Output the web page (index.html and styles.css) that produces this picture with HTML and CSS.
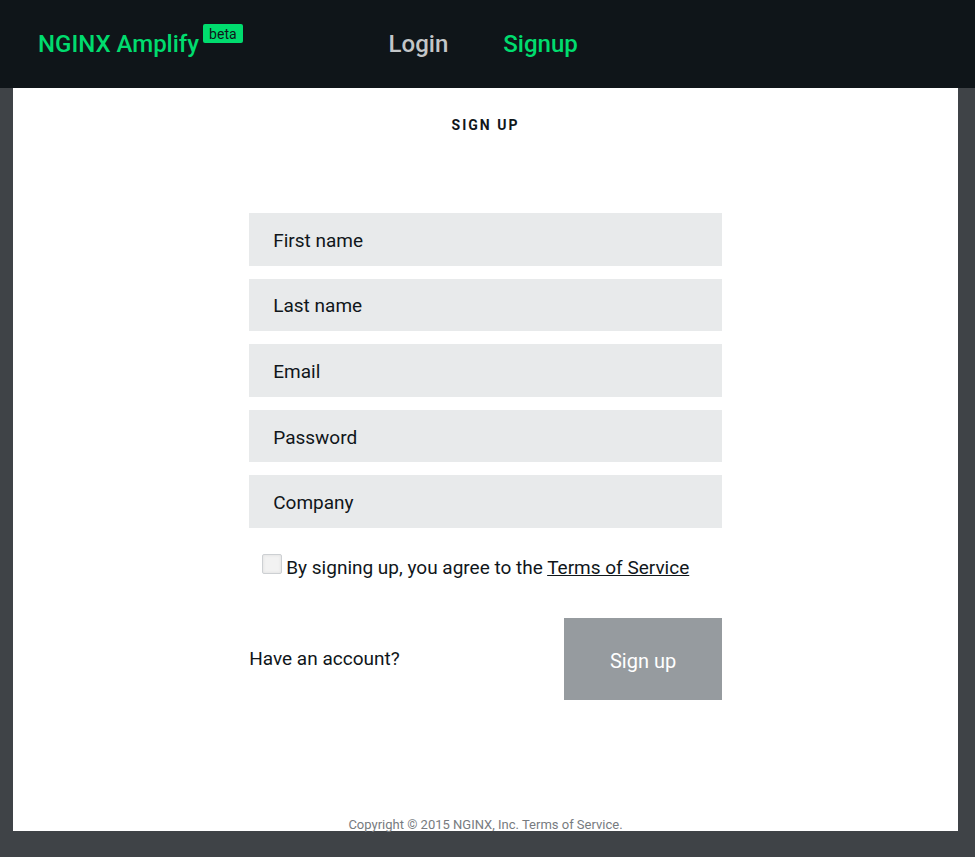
FILE: index.html
```html
<!DOCTYPE html>
<html lang="en">
  <head>
    <meta charset="UTF-8" />
    <meta name="viewport" content="width=device-width, initial-scale=1.0" />
    <title>NGINX Amplify</title>
    <link rel="stylesheet" href="styles.css">
  </head>
  <body>
    <header class="header">
      <a class="logo" href="#">NGINX Amplify <span class="beta">beta</span></a>
      <nav class="nav">
        <a href="#login">Login</a>
        <a class="active" href="#signup">Signup</a>
      </nav>
    </header>
    <main class="panel">
      <h1>Sign up</h1>
      <form class="signup-form">
        <div class="fields">
          <input type="text" placeholder="First name" aria-label="First name" />
          <input type="text" placeholder="Last name" aria-label="Last name" />
          <input type="email" placeholder="Email" aria-label="Email" />
          <input type="password" placeholder="Password" aria-label="Password" />
          <input type="text" placeholder="Company" aria-label="Company" />
        </div>
        <div class="terms">
          <input type="checkbox" id="agree" />
          <label for="agree">By signing up, you agree to the <a href="#terms">Terms of Service</a></label>
        </div>
        <div class="actions">
          <a href="#login">Have an account?</a>
          <button type="submit">Sign up</button>
        </div>
      </form>
      <footer class="footer">Copyright © 2015 NGINX, Inc. <a href="#terms">Terms of Service.</a></footer>
    </main>
  </body>
</html>
```

FILE: styles.css
```css
* {
  box-sizing: border-box;
}
body {
  display: flex;
  flex-direction: column;
  min-height: 100vh;
  margin: 0;
  background-color: #3f4347;
  color: #10161a;
  font-family: Roboto, "Liberation Sans", sans-serif;
  font-size: 19px;
  line-height: 28px;
}
a {
  color: inherit;
  text-decoration: none;
}
.header {
  display: flex;
  align-items: center;
  height: 88px;
  padding: 0 38px;
  background-color: #0f1519;
  font-size: 24px;
  font-weight: 500;
}
.logo {
  display: flex;
  width: 39%;
  gap: 4px;
  color: #00dc6e;
}
.beta {
  height: 19px;
  padding: 0 6px;
  margin-top: -6px;
  border-radius: 2px;
  background-color: #00dc6e;
  color: #10161a;
  font-size: 14px;
  font-weight: 400;
  line-height: 21px;
}
.nav {
  display: flex;
  gap: 55px;
  color: #c3c6c8;
}
.nav .active {
  color: #00dc6e;
}
.panel {
  display: flex;
  flex-direction: column;
  align-items: center;
  flex: 1;
  margin: 0 17px 26px 13px;
  background-color: #fff;
}
.panel h1 {
  margin: 27px 0 78px;
  font-size: 14px;
  font-weight: 700;
  line-height: 20px;
  letter-spacing: 2px;
  text-transform: uppercase;
}
.signup-form {
  width: 50%;
}
.fields {
  display: grid;
  grid-auto-rows: 1fr;
  gap: 13px;
  height: 315px;
}
.fields input {
  width: 100%;
  padding: 3px 24px 0;
  border: none;
  border-radius: 0;
  background-color: #e8eaeb;
  color: #10161a;
  font: inherit;
}
.fields input::placeholder {
  color: #10161a;
  opacity: 1;
}
.terms {
  display: flex;
  gap: 4px;
  margin: 26px 0 36px 13px;
}
.terms input {
  appearance: none;
  width: 20px;
  height: 20px;
  margin: 0;
  border: 1px solid #cdd0d3;
  border-radius: 2px;
  background-color: #f2f2f2;
  box-shadow: inset 0 0 3px #dcdcdc;
}
.terms input:checked {
  background-color: #00dc6e;
}
.terms a {
  text-decoration: underline;
}
.actions {
  display: flex;
  align-items: center;
  justify-content: space-between;
}
.actions button {
  width: 33.3%;
  height: 82px;
  padding: 4px 0 0;
  border: none;
  background-color: #969b9f;
  color: #fff;
  font: inherit;
  font-size: 20px;
  cursor: pointer;
}
.footer {
  margin: auto 0 -4px;
  color: #777b80;
  font-size: 13px;
  line-height: 20px;
}
```
